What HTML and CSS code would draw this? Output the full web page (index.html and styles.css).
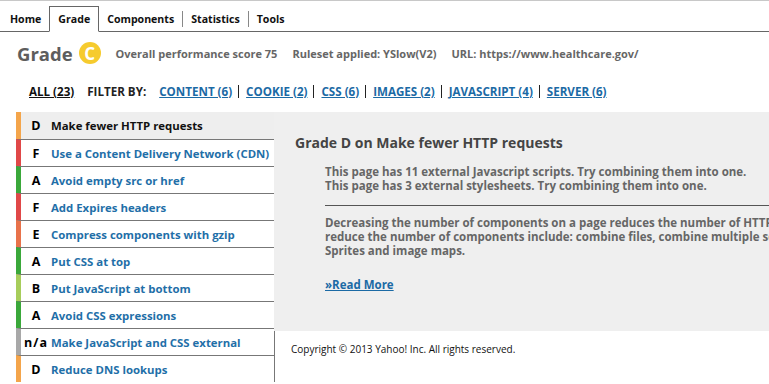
FILE: index.html
```html
<!DOCTYPE html>
<html>
<head>
<meta charset="utf-8">
<link rel="stylesheet" href="styles.css">
</head>
<body>
<div class="page">
  <nav class="tabs">
    <a class="tab">Home</a>
    <a class="tab active">Grade</a>
    <a class="tab sep">Components</a>
    <a class="tab sep">Statistics</a>
    <a class="tab">Tools</a>
  </nav>
  <header class="summary">
    <h1 class="grade-title">Grade <span class="badge">C</span></h1>
    <span class="meta">Overall performance score 75</span>
    <span class="meta">Ruleset applied: YSlow(V2)</span>
    <span class="meta">URL: https://www.healthcare.gov/</span>
  </header>
  <div class="filters">
    <a class="all">ALL (23)</a>
    <span class="filter-label">FILTER BY:</span>
    <a class="flink">CONTENT (6)</a><span class="fsep"></span>
    <a class="flink">COOKIE (2)</a><span class="fsep"></span>
    <a class="flink">CSS (6)</a><span class="fsep"></span>
    <a class="flink">IMAGES (2)</a><span class="fsep"></span>
    <a class="flink">JAVASCRIPT (4)</a><span class="fsep"></span>
    <a class="flink">SERVER (6)</a>
  </div>
  <div class="main">
    <ul class="rules">
      <li class="rule active g-d"><span class="letter">D</span><span class="name">Make fewer HTTP requests</span></li>
      <li class="rule g-f"><span class="letter">F</span><span class="name">Use a Content Delivery Network (CDN)</span></li>
      <li class="rule g-a"><span class="letter">A</span><span class="name">Avoid empty src or href</span></li>
      <li class="rule g-f"><span class="letter">F</span><span class="name">Add Expires headers</span></li>
      <li class="rule g-e"><span class="letter">E</span><span class="name">Compress components with gzip</span></li>
      <li class="rule g-a"><span class="letter">A</span><span class="name">Put CSS at top</span></li>
      <li class="rule g-b"><span class="letter">B</span><span class="name">Put JavaScript at bottom</span></li>
      <li class="rule g-a"><span class="letter">A</span><span class="name">Avoid CSS expressions</span></li>
      <li class="rule g-na"><span class="letter na">n/a</span><span class="name">Make JavaScript and CSS external</span></li>
      <li class="rule g-d"><span class="letter">D</span><span class="name">Reduce DNS lookups</span></li>
    </ul>
    <div class="detail-col">
      <section class="detail">
        <h2 class="detail-title">Grade D on Make fewer HTTP requests</h2>
        <div class="detail-body">
          <p class="findings">This page has 11 external Javascript scripts. Try combining them into one.<br>This page has 3 external stylesheets. Try combining them into one.</p>
          <hr class="rule-line">
          <p class="desc">Decreasing the number of components on a page reduces the number of HTTP requests required to render the page, resulting in faster page loads. Some ways to<br>reduce the number of components include: combine files, combine multiple scripts into one script, combine multiple CSS files into one style sheet, and use CSS<br>Sprites and image maps.</p>
          <a class="more">»Read More</a>
        </div>
      </section>
      <footer class="copyright">Copyright © 2013 Yahoo! Inc. All rights reserved.</footer>
    </div>
  </div>
</div>
</body>
</html>
```

FILE: styles.css
```css
html, body {
  margin: 0;
  padding: 0;
  background: #fff;
  overflow: hidden;
}
body {
  font-family: "Open Sans", "DejaVu Sans", sans-serif;
  border-top: 1px solid #c8c8c8;
  height: 383px;
}
.page {
  width: 769px;
  height: 383px;
  overflow: hidden;
}
.tabs {
  display: flex;
  margin-top: 6px;
  height: 24px;
  border-bottom: 1px solid #666;
  padding-left: 2px;
}
.tab {
  display: flex;
  align-items: center;
  height: 24px;
  padding: 0 8px;
  font-size: 10.6px;
  font-weight: 700;
  color: #111;
}
.tab.active {
  border: 1px solid #666;
  border-bottom: 1px solid #fff;
  background: #fff;
  margin-top: -1px;
}
.tab.sep {
  border-right: 1px solid #888;
  height: 16px;
  align-self: center;
}
.summary {
  display: flex;
  align-items: center;
  height: 40px;
  padding-left: 17px;
  margin-top: 1px;
}
.grade-title {
  display: flex;
  align-items: center;
  margin: 0 15px 0 0;
  font-size: 18.5px;
  font-weight: 700;
  color: #5d5d5d;
}
.badge {
  display: inline-flex;
  align-items: center;
  justify-content: center;
  width: 22px;
  height: 22px;
  border-radius: 50%;
  background: #f6cb2e;
  color: #fff;
  font-size: 17px;
  margin-left: 6px;
}
.meta {
  font-size: 11px;
  font-weight: 700;
  color: #666;
  margin-right: 15px;
}
.filters {
  display: flex;
  align-items: center;
  height: 20px;
  margin-top: 8px;
  padding-left: 29px;
  font-size: 11.6px;
  font-weight: 700;
}
.all {
  color: #111;
  text-decoration: underline;
  margin-right: 13px;
}
.filter-label {
  color: #222;
  margin-right: 13px;
}
.flink {
  color: #1b6aa5;
  text-decoration: underline;
}
.fsep {
  width: 1px;
  height: 13px;
  background: #222;
  margin: 0 7px 0 6px;
}
.main {
  display: flex;
  margin-top: 11px;
}
.rules {
  list-style: none;
  margin: 0 0 0 16px;
  padding: 0;
  width: 259px;
  flex: none;
}
.rule {
  display: flex;
  align-items: center;
  height: 26px;
  border-top: 1px solid #777;
  border-right: 1px solid #777;
  border-left: 5px solid #ccc;
}
.rule.active {
  border-top: 0;
  height: 27px;
  background: #eee;
  border-right: 1px solid #eee;
}
.letter {
  width: 30px;
  text-align: center;
  font-size: 12.5px;
  font-weight: 700;
  color: #000;
}
.letter.na {
  font-size: 12.5px;
  letter-spacing: 1px;
}
.name {
  font-size: 11.4px;
  font-weight: 700;
  color: #1f6fa8;
  white-space: nowrap;
}
.rule.active .name {
  color: #111;
}
.g-a { border-left-color: #3aa83a; }
.g-b { border-left-color: #a7cd5b; }
.g-d { border-left-color: #f4a54b; }
.g-e { border-left-color: #e8724a; }
.g-f { border-left-color: #e04848; }
.g-na { border-left-color: #a8a8a8; }
.detail-col {
  flex: none;
  width: 494px;
}
.detail {
  background: #efefef;
  height: 219px;
  padding: 22px 0 0 21px;
  box-sizing: border-box;
  width: 520px;
  margin-left: -1px;
}
.detail-title {
  margin: 0 0 13px 0;
  font-size: 14px;
  line-height: 18px;
  font-weight: 700;
  color: #444;
}
.detail-body {
  padding-left: 30px;
}
.findings, .desc {
  margin: 0;
  font-size: 11.5px;
  font-weight: 700;
  color: #666;
  line-height: 14px;
  white-space: nowrap;
}
.rule-line {
  border: 0;
  border-top: 1px solid #555;
  margin: 12px 0 10px 0;
  width: 600px;
}
.more {
  display: inline-block;
  margin-top: 20px;
  font-size: 11.5px;
  line-height: 14px;
  font-weight: 700;
  color: #1b6aa5;
  text-decoration: underline;
}
.copyright {
  padding: 12px 0 0 16px;
  font-size: 10px;
  line-height: 12px;
  color: #111;
}
```
